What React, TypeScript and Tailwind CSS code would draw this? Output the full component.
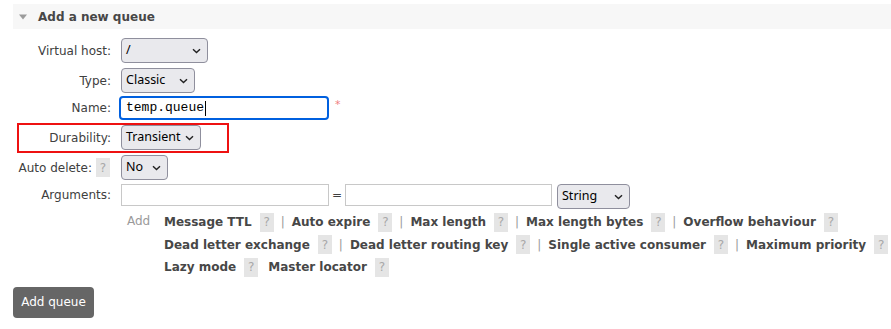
import React from "react";

const txt = "text-[#404040]";

function Chevron() {
  return (
    <svg width="9" height="6" viewBox="0 0 9 6" className="shrink-0">
      <path d="M1 1.2 L4.5 4.6 L8 1.2" fill="none" stroke="#222" strokeWidth="1.4" />
    </svg>
  );
}

function Sel({ value, w }: { value: string; w: string }) {
  return (
    <div
      className={`${w} h-[25px] flex items-center justify-between pl-[4px] pr-[6px] bg-[#e9e9ed] border border-[#8f8f9d] rounded-[4px] text-[12.5px] text-black font-['Noto_Sans',sans-serif]`}
    >
      <span>{value}</span>
      <Chevron />
    </div>
  );
}

function Help() {
  return (
    <span className="inline-flex shrink-0 items-center justify-center w-[14px] h-[19px] bg-[#e5e5e5] text-[#a8a8a8] text-[12px] font-normal">
      ?
    </span>
  );
}

function Bar() {
  return <span className="text-[#9a9a9a] font-normal mx-[7px]">|</span>;
}

function Link({ label, last }: { label: string; last?: boolean }) {
  return (
    <span className="flex items-center shrink-0 whitespace-nowrap">
      <span className="font-bold mr-[8px] text-[#474747]">{label}</span>
      <Help />
      {!last && <Bar />}
    </span>
  );
}

export default function App() {
  return (
    <div className={`w-[891px] h-[329px] bg-white ${txt} text-[12px] font-['DejaVu_Sans',Verdana,sans-serif] pt-[4px] overflow-hidden`}>
      {/* section header */}
      <div className="ml-[13px] h-[25px] bg-[#f7f7f7] flex items-center">
        <svg width="8" height="6" viewBox="0 0 8 6" className="ml-[6px] mr-[11px]">
          <path d="M0 0.5 L8 0.5 L4 5.5 Z" fill="#9b9b9b" />
        </svg>
        <span className="font-bold text-[12px] text-[#474747]">Add a new queue</span>
      </div>

      <div className="flex flex-col mt-[9px]">
        <div className="flex items-center">
          <div className="w-[111px] text-right">Virtual host:</div>
          <div className="ml-[10px]">
            <Sel value="/" w="w-[87px]" />
          </div>
        </div>

        <div className="flex items-center mt-[5px]">
          <div className="w-[111px] text-right">Type:</div>
          <div className="ml-[10px]">
            <Sel value="Classic" w="w-[74px]" />
          </div>
        </div>

        <div className="flex items-center mt-[3px]">
          <div className="w-[111px] text-right">Name:</div>
          <div className="ml-[8px] w-[210px] h-[24px] border-2 border-[#0060df] rounded-[4px] flex items-center pl-[5px] text-black text-[13px] font-['Liberation_Mono',monospace]">
            temp.queue
            <span className="w-px h-[15px] bg-black ml-[1px]" />
          </div>
          <span className="ml-[6px] text-[#f08080] text-[11px] self-start mt-[1px]">*</span>
        </div>

        <div className="flex items-center mt-[5px] relative">
          <div className="w-[111px] text-right">Durability:</div>
          <div className="ml-[10px]">
            <Sel value="Transient" w="w-[80px]" />
          </div>
          <div className="absolute left-[17px] top-[-2px] w-[212px] h-[30px] border-2 border-[#ee1111]" />
        </div>

        <div className="flex items-center mt-[5px]">
          <div className="w-[111px] flex items-center justify-end">
            <span className="mr-[4px]">Auto delete:</span>
            <span className="mr-[1px] flex">
              <Help />
            </span>
          </div>
          <div className="ml-[10px]">
            <Sel value="No" w="w-[47px]" />
          </div>
        </div>

        <div className="flex items-start mt-[4px]">
          <div className="w-[111px] text-right h-[22px] flex items-center justify-end">Arguments:</div>
          <div className="ml-[10px] w-[208px] h-[22px] border border-[#c8c8c8]" />
          <span className="w-[16px] h-[22px] flex items-center justify-center">=</span>
          <div className="w-[207px] h-[22px] border border-[#c8c8c8]" />
          <div className="ml-[5px]">
            <Sel value="String" w="w-[73px]" />
          </div>
        </div>

        <div className="flex mt-[2px]">
          <div className="w-[164px] shrink-0 pl-[127px] text-[#9a9a9a] pt-[1px]">Add</div>
          <div className="flex flex-col">
            <div className="h-[22.5px] flex items-center">
              <Link label="Message TTL" />
              <Link label="Auto expire" />
              <Link label="Max length" />
              <Link label="Max length bytes" />
              <Link label="Overflow behaviour" last />
            </div>
            <div className="h-[22.5px] flex items-center">
              <Link label="Dead letter exchange" />
              <Link label="Dead letter routing key" />
              <Link label="Single active consumer" />
              <Link label="Maximum priority" last />
            </div>
            <div className="h-[22.5px] flex items-center">
              <Link label="Lazy mode" last />
              <span className="ml-[10px]" />
              <Link label="Master locator" last />
            </div>
          </div>
        </div>

        <div className="ml-[13px] mt-[8px]">
          <button className="w-[81px] h-[31px] bg-[#666666] rounded-[4px] text-white text-[12px] font-['DejaVu_Sans',sans-serif]">
            Add queue
          </button>
        </div>
      </div>
    </div>
  );
}
